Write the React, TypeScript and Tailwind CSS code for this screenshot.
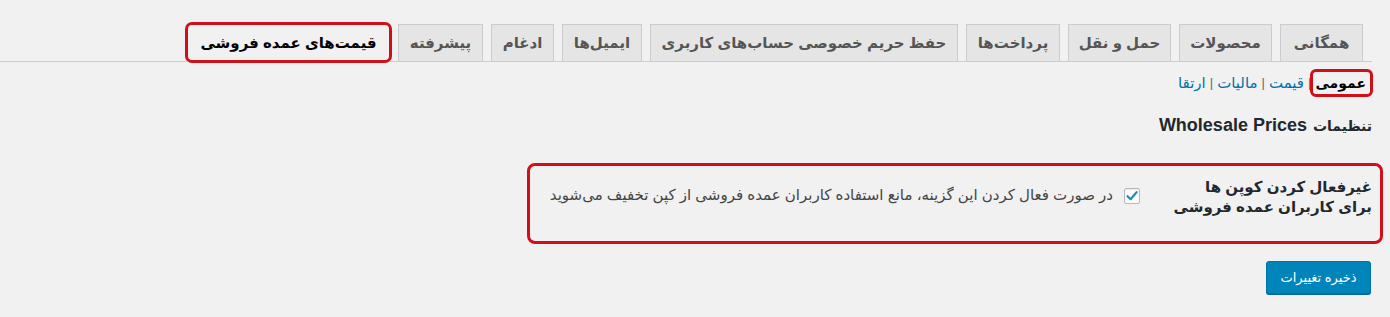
import React from "react";

const tabs = [
  { label: "همگانی", w: "w-[83px]" },
  { label: "محصولات", w: "w-[93px]" },
  { label: "حمل و نقل", w: "w-[103px]" },
  { label: "پرداخت‌ها", w: "w-[94px]" },
  { label: "حفظ حریم خصوصی حساب‌های کاربری", w: "w-[308px]" },
  { label: "ایمیل‌ها", w: "w-[80px]" },
  { label: "ادغام", w: "w-[63px]" },
  { label: "پیشرفته", w: "w-[85px]" },
];

export default function App() {
  return (
    <div
      dir="rtl"
      className="min-h-[317px] bg-[#f1f1f1] text-[#23282d] font-['Liberation_Sans','DejaVu_Sans',sans-serif]"
    >
      <div className="mr-[18px]">
        {/* tabs */}
        <div className="flex items-end gap-[8px] pr-[9px] pt-[24px] border-b border-[#cccccc] h-[62px]">
          {tabs.map((t) => (
            <div
              key={t.label}
              className={`${t.w} h-[37px] shrink-0 flex items-center justify-center border border-b-0 border-[#cccccc] bg-[#e5e5e5] text-[15px] font-bold text-[#555555] whitespace-nowrap`}
            >
              {t.label}
            </div>
          ))}
          <div className="relative w-[203px] h-[38px] -mb-px shrink-0 flex items-center justify-center bg-[#f1f1f1] text-[15px] font-bold text-black whitespace-nowrap">
            قیمت‌های عمده فروشی
            <div className="absolute -top-[2px] -bottom-[1px] -left-[2px] -right-[2px] border-[3px] border-[#d01018] rounded-[7px] pointer-events-none" />
          </div>
        </div>

        {/* sub links */}
        <div className="mt-[11px] flex items-center text-[15px] leading-[20px] pr-[6px]">
          <span className="relative font-bold text-[14px] text-black">
            عمومی
            <span className="absolute -top-[4px] -bottom-[4px] -right-[7px] -left-[5px] border-[3px] border-[#d01018] rounded-[6px]" />
          </span>
          <span className="text-[#666] mx-[4px] text-[13px]">|</span>
          <span className="text-[#0073aa]">قیمت</span>
          <span className="text-[#666] mx-[4px] text-[13px]">|</span>
          <span className="text-[#0073aa]">مالیات</span>
          <span className="text-[#666] mx-[4px] text-[13px]">|</span>
          <span className="text-[#0073aa]">ارتقا</span>
        </div>

        {/* heading */}
        <h2 className="mt-[20px] flex items-baseline gap-[6px] leading-[24px] font-bold text-[#23282d] whitespace-nowrap">
          <span className="text-[14px]">تنظیمات</span>
          <span dir="ltr" className="text-[18px]">Wholesale Prices</span>
        </h2>

        {/* form row */}
        <div className="relative mt-[25px] h-[81px] flex pt-[14px]">
          <div className="absolute top-0 -right-[11px] w-[856px] h-[81px] border-[3px] border-[#d01018] rounded-[8px] pointer-events-none" />
          <div className="w-[210px] shrink-0 text-[15px] font-bold leading-[20px] text-[#23282d] whitespace-nowrap">
            <div>غیرفعال کردن کوپن ها</div>
            <div>برای کاربران عمده فروشی</div>
          </div>
          <div className="flex items-start">
            <div className="mt-[11px] mr-[22px] w-[16px] h-[16px] bg-white border border-[#b4b9be] rounded-[2px] shadow-[inset_0_1px_2px_rgba(0,0,0,0.1)] flex items-center justify-center shrink-0">
              <svg width="14" height="14" viewBox="0 0 14 14">
                <path d="M2.5 7.2 L5.6 10.2 L11.6 3.2" fill="none" stroke="#1e8cbe" strokeWidth="2.2" strokeLinecap="round" strokeLinejoin="round" />
              </svg>
            </div>
            <div className="mt-[8px] mr-[11px] text-[15px] leading-[20px] text-[#444] whitespace-nowrap">
              در صورت فعال کردن این گزینه، مانع استفاده کاربران عمده فروشی از کپن تخفیف می‌شوید
            </div>
          </div>
        </div>

        {/* button */}
        <div className="mt-[17px] pr-[1px]">
          <button className="w-[105px] h-[33px] bg-[#0085ba] border border-[#0073aa] rounded-[3px] shadow-[0_1px_0_#006799] text-white text-[13px]">
            ذخیره تغییرات
          </button>
        </div>
      </div>
    </div>
  );
}
